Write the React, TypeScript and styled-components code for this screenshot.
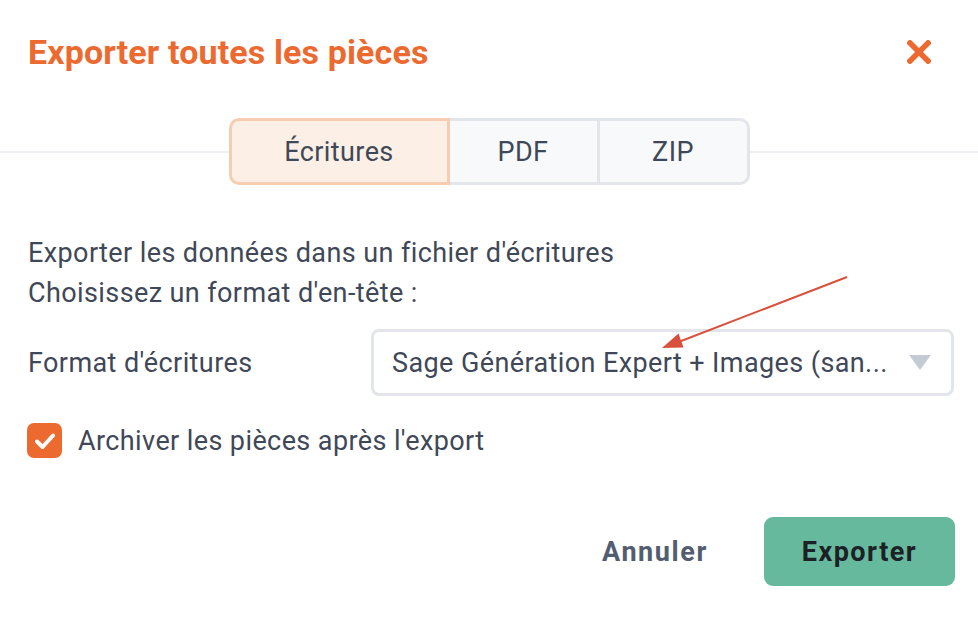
import React, { useState } from 'react';
import styled, { createGlobalStyle } from 'styled-components';

const GlobalStyle = createGlobalStyle`
  html, body {
    margin: 0;
    padding: 0;
    background: #ffffff;
  }
  body {
    font-family: Roboto, 'Liberation Sans', Arial, sans-serif;
    color: #3f4858;
  }
`;

const Page = styled.div`
  position: relative;
  width: 978px;
  height: 626px;
  display: flex;
  flex-direction: column;
  overflow: hidden;
`;

const Header = styled.div`
  display: flex;
  align-items: center;
  justify-content: space-between;
  height: 52px;
  padding: 26px 46px 0 28px;
`;

const Title = styled.h1`
  margin: 0;
  font-size: 34px;
  font-weight: 700;
  color: #ec6a2f;
  letter-spacing: 0.13px;
`;

const CloseButton = styled.button`
  border: none;
  background: none;
  padding: 0;
  width: 26px;
  height: 26px;
  display: flex;
  align-items: center;
  justify-content: center;
  cursor: pointer;
`;

const TabBar = styled.div`
  display: flex;
  align-items: center;
  margin-top: 40px;
`;

const Rule = styled.div`
  flex: 1;
  height: 2px;
  background: #eef0f4;
`;

const Tabs = styled.div`
  display: flex;
`;

const Tab = styled.button<{ $active?: boolean; $width: number; $pos: 'first' | 'mid' | 'last' }>`
  width: ${(p) => p.$width}px;
  height: 67px;
  box-sizing: border-box;
  font-family: inherit;
  font-size: 27px;
  letter-spacing: 0.4px;
  color: #3f4858;
  background: ${(p) => (p.$active ? '#fcefe6' : '#f8f9fb')};
  border: 3px solid ${(p) => (p.$active ? '#f6cdb0' : '#e2e5ea')};
  margin-left: ${(p) => (p.$pos === 'first' ? '0' : '-3px')};
  position: relative;
  z-index: ${(p) => (p.$active ? 1 : 0)};
  border-radius: ${(p) =>
    p.$pos === 'first' ? '10px 0 0 10px' : p.$pos === 'last' ? '0 10px 10px 0' : '0'};
  cursor: pointer;
  padding: 0;
`;

const Body = styled.div`
  display: flex;
  flex-direction: column;
  padding: 48px 24px 0 28px;
  font-size: 27px;
  letter-spacing: 0.4px;
`;

const Paragraph = styled.p`
  margin: 0;
  line-height: 40px;
`;

const FieldRow = styled.div`
  display: flex;
  align-items: center;
  justify-content: space-between;
  margin-top: 16px;
`;

const Label = styled.label``;

const Select = styled.div`
  width: 583px;
  height: 67px;
  box-sizing: border-box;
  border: 3px solid #e2e5ea;
  border-radius: 8px;
  display: flex;
  align-items: center;
  justify-content: space-between;
  padding: 0 20px 0 18px;
`;

const SelectValue = styled.span`
  white-space: nowrap;
`;

const CheckRow = styled.label`
  display: flex;
  align-items: center;
  gap: 16px;
  margin-top: 27px;
  cursor: pointer;
`;

const Box = styled.span<{ $checked: boolean }>`
  width: 35px;
  height: 35px;
  margin-left: -1px;
  border-radius: 7px;
  display: flex;
  align-items: center;
  justify-content: center;
  background: ${(p) => (p.$checked ? '#ec6a2f' : '#ffffff')};
  border: ${(p) => (p.$checked ? 'none' : '3px solid #e2e5ea')};
  box-sizing: border-box;
`;

const Footer = styled.div`
  display: flex;
  justify-content: flex-end;
  align-items: center;
  gap: 56px;
  padding: 59px 23px 0 0;
`;

const GhostButton = styled.button`
  border: none;
  background: none;
  font-family: inherit;
  font-size: 27px;
  font-weight: 700;
  letter-spacing: 1.6px;
  color: #525d6f;
  padding: 0;
  cursor: pointer;
`;

const PrimaryButton = styled.button`
  width: 191px;
  height: 69px;
  border: none;
  border-radius: 9px;
  background: #67b99e;
  font-family: inherit;
  font-size: 27px;
  font-weight: 700;
  letter-spacing: 1.5px;
  color: #1c2126;
  cursor: pointer;
`;

const Annotation = styled.svg`
  position: absolute;
  left: 0;
  top: 0;
  pointer-events: none;
`;

const tabs = [
  { key: 'ecr', label: 'Écritures', width: 221 },
  { key: 'pdf', label: 'PDF', width: 153 },
  { key: 'zip', label: 'ZIP', width: 153 },
];

export default function App() {
  const [active, setActive] = useState('ecr');
  const [archive, setArchive] = useState(true);

  return (
    <Page>
      <GlobalStyle />
      <Header>
        <Title>Exporter toutes les pièces</Title>
        <CloseButton aria-label="Fermer">
          <svg width="24" height="24" viewBox="0 0 24 24">
            <path d="M3 3 L21 21 M21 3 L3 21" stroke="#ec6a2f" strokeWidth="5.5" strokeLinecap="square" />
          </svg>
        </CloseButton>
      </Header>

      <TabBar>
        <Rule />
        <Tabs>
          {tabs.map((t, i) => (
            <Tab
              key={t.key}
              $width={t.width}
              $active={active === t.key}
              $pos={i === 0 ? 'first' : i === tabs.length - 1 ? 'last' : 'mid'}
              onClick={() => setActive(t.key)}
            >
              {t.label}
            </Tab>
          ))}
        </Tabs>
        <Rule />
      </TabBar>

      <Body>
        <Paragraph>
          Exporter les données dans un fichier d'écritures
          <br />
          Choisissez un format d'en-tête :
        </Paragraph>

        <FieldRow>
          <Label>Format d'écritures</Label>
          <Select>
            <SelectValue>Sage Génération Expert + Images (san...</SelectValue>
            <svg width="22" height="15" viewBox="0 0 22 15">
              <path d="M0 0 H22 L11 15 Z" fill="#c4cad3" />
            </svg>
          </Select>
        </FieldRow>

        <CheckRow onClick={() => setArchive(!archive)}>
          <Box $checked={archive}>
            {archive && (
              <svg width="22" height="18" viewBox="0 0 22 18">
                <path d="M3 9.5 L8.5 15 L19 3.5" fill="none" stroke="#ffffff" strokeWidth="4" strokeLinecap="round" strokeLinejoin="round" />
              </svg>
            )}
          </Box>
          Archiver les pièces après l'export
        </CheckRow>
      </Body>

      <Footer>
        <GhostButton>Annuler</GhostButton>
        <PrimaryButton>Exporter</PrimaryButton>
      </Footer>

      <Annotation width="978" height="626" viewBox="0 0 978 626">
        <line x1="847" y1="277" x2="676" y2="343" stroke="#d9513c" strokeWidth="2" />
        <path d="M662 348 L678.5 333.5 L683.5 347.5 Z" fill="#d9513c" />
      </Annotation>
    </Page>
  );
}
